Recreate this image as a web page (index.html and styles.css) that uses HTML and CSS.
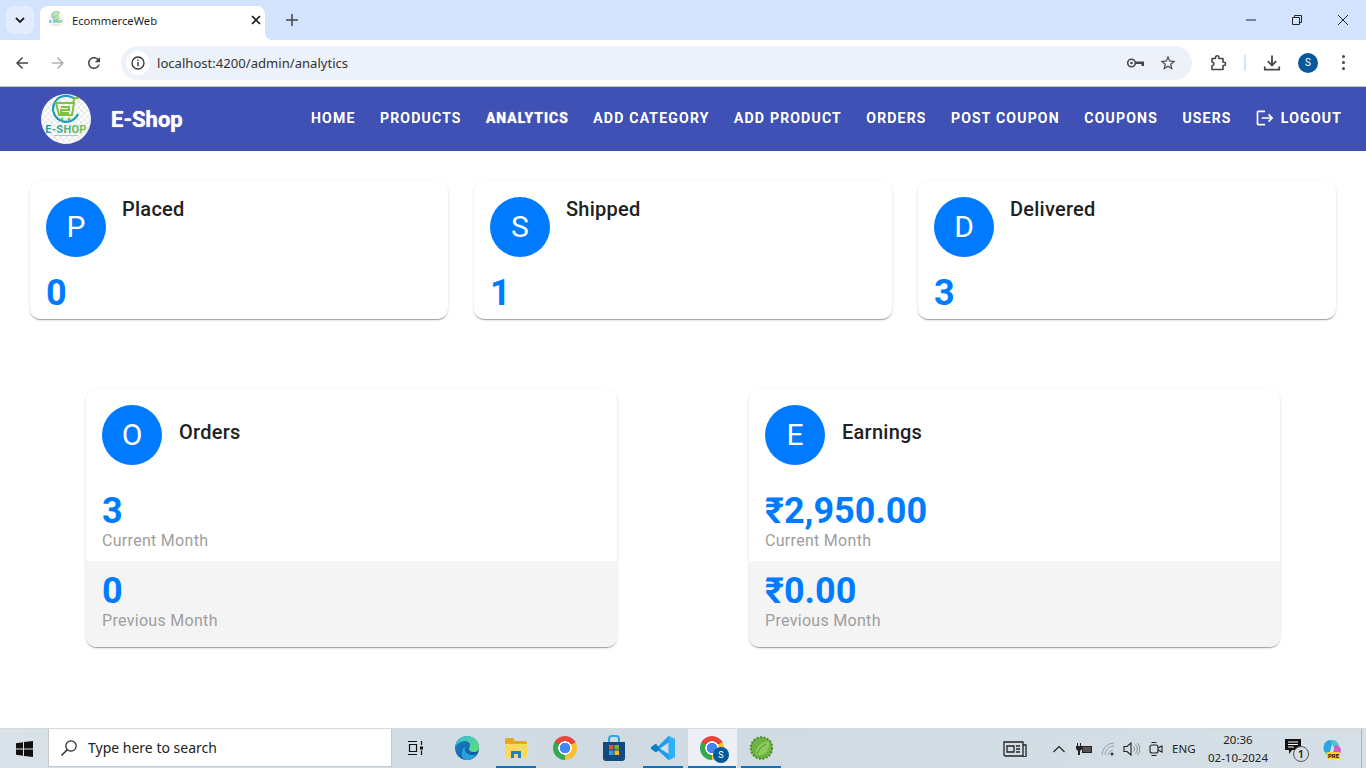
FILE: index.html
```html
<!DOCTYPE html>
<html lang="en">
<head>
    <meta charset="UTF-8">
    <meta name="viewport" content="width=device-width, initial-scale=1.0">
    <title>EcommerceWeb</title>
    <link rel="stylesheet" href="styles.css">
</head>
<body>
    <svg class="defs" width="0" height="0">
        <defs>
            <pattern id="checker" width="6" height="6" patternUnits="userSpaceOnUse">
                <rect width="6" height="6" fill="#fff"/>
                <rect width="3" height="3" fill="#ececec"/>
                <rect x="3" y="3" width="3" height="3" fill="#ececec"/>
            </pattern>
            <linearGradient id="word-fill" x1="0" y1="0" x2="1" y2="0">
                <stop offset="0" stop-color="#1c9cb8"/>
                <stop offset="1" stop-color="#7fc241"/>
            </linearGradient>
            <symbol id="shop-logo" viewBox="0 0 50 50">
                <circle cx="25" cy="25" r="25" fill="url(#checker)"/>
                <path d="M33 4.500A13 13 0 1 0 37 20" fill="none" stroke="#1c9cb8" stroke-width="2.2"/>
                <path d="M15 9H33L31 21H18ZM20 13H28V16H20V19H28" fill="none" stroke="#7fc241" stroke-width="2"/>
                <path d="M32 9L34 4H38" fill="none" stroke="#7fc241" stroke-width="2"/>
                <circle cx="21" cy="25" r="1.5" fill="#7fc241"/>
                <circle cx="28" cy="25" r="1.5" fill="#7fc241"/>
                <text x="25" y="39" text-anchor="middle" class="logo-word">E-SHOP</text>
                <rect x="13" y="41" width="24" height="1" fill="#b5c4c4"/>
            </symbol>
        </defs>
    </svg>

    <!-- navegador -->
    <div class="tabstrip">
        <div class="tab-search">
            <svg width="12" height="12" viewBox="0 0 12 12"><path d="M2 4l4 4 4-4" fill="none" stroke="#1f1f1f" stroke-width="1.8"/></svg>
        </div>
        <div class="tab">
            <svg class="favicon" width="16" height="16"><use href="#shop-logo"/></svg>
            <span class="tab-title">EcommerceWeb</span>
            <svg class="tab-close" width="10" height="10" viewBox="0 0 10 10"><path d="M1 1l8 8M9 1l-8 8" stroke="#1f1f1f" stroke-width="1.7"/></svg>
        </div>
        <svg class="new-tab" width="12" height="12" viewBox="0 0 12 12"><path d="M6 0v12M0 6h12" stroke="#444" stroke-width="1.5"/></svg>
        <div class="window-btns">
            <svg width="12" height="12" viewBox="0 0 12 12"><path d="M1 6h10" stroke="#222" stroke-width="1"/></svg>
            <svg width="12" height="12" viewBox="0 0 12 12"><path d="M1.500 3.500h7v7h-7zM3.500 3.500v-2h7v7h-2" fill="none" stroke="#222" stroke-width="1"/></svg>
            <svg width="12" height="12" viewBox="0 0 12 12"><path d="M1 1l10 10M11 1L1 11" stroke="#222" stroke-width="1"/></svg>
        </div>
    </div>
    <div class="toolbar">
        <svg class="tool-icon" width="18" height="18" viewBox="0 0 24 24"><path fill="#474747" d="M20 11H7.830l5.590-5.590L12 4l-8 8 8 8 1.410-1.410L7.830 13H20v-2z"/></svg>
        <svg class="tool-icon" width="18" height="18" viewBox="0 0 24 24"><path fill="#b0b0b0" d="M12 4l-1.410 1.410L16.170 11H4v2h12.170l-5.580 5.590L12 20l8-8z"/></svg>
        <svg class="tool-icon" width="18" height="18" viewBox="0 0 24 24"><path fill="#474747" d="M17.650 6.350C16.200 4.900 14.210 4 12 4c-4.420 0-7.990 3.580-7.990 8s3.570 8 7.990 8c3.730 0 6.840-2.550 7.730-6h-2.080c-.820 2.330-3.040 4-5.650 4-3.310 0-6-2.690-6-6s2.690-6 6-6c1.660 0 3.140.690 4.220 1.780L13 11h7V4l-2.350 2.350z"/></svg>
        <div class="omnibox">
            <span class="site-info">
                <svg width="14" height="14" viewBox="0 0 14 14"><circle cx="7" cy="7" r="6" fill="none" stroke="#333" stroke-width="1.3"/><path d="M7 6v4.200M7 3.600v1.300" stroke="#333" stroke-width="1.4"/></svg>
            </span>
            <span class="url">localhost:4200/admin/analytics</span>
            <svg class="omni-key" width="20" height="12" viewBox="0 0 20 12"><circle cx="5.500" cy="6" r="3.800" fill="none" stroke="#474747" stroke-width="1.6"/><circle cx="5.500" cy="6" r="1.300" fill="#474747"/><path d="M9.500 4.500h8.500v4.500h-2.500v-2h-6z" fill="#474747"/></svg>
            <svg class="omni-star" width="18" height="18" viewBox="0 0 24 24"><path fill="#474747" d="M22 9.240l-7.190-.620L12 2 9.190 8.630 2 9.240l5.460 4.730L5.820 21 12 17.270 18.180 21l-1.630-7.030L22 9.240zM12 15.400l-3.760 2.270 1-4.280-3.320-2.880 4.380-.380L12 6.100l1.710 4.040 4.380.380-3.320 2.880 1 4.280L12 15.400z"/></svg>
        </div>
        <div class="toolbar-right">
            <svg width="18" height="18" viewBox="0 0 18 18"><path d="M3 4.500h3.500V3.500a1.700 1.700 0 0 1 3.400 0v1h4.100v3.800h1a1.600 1.600 0 0 1 0 3.200h-1v4H3v-3.600a2 2 0 0 0 1.200-3.500A2 2 0 0 0 3 8z" fill="none" stroke="#474747" stroke-width="1.6" stroke-linejoin="round"/></svg>
            <span class="tool-sep"></span>
            <svg width="18" height="18" viewBox="0 0 18 18"><path d="M9 1.500v9.500M4.800 7.200L9 11.400l4.200-4.200M1.800 12.500v3.200h14.400v-3.200" fill="none" stroke="#474747" stroke-width="1.8"/></svg>
            <span class="profile">S</span>
            <span class="kebab"><i></i><i></i><i></i></span>
        </div>
    </div>

    <!-- pagina -->
    <nav class="navbar">
        <svg class="brand-logo" width="50" height="50"><use href="#shop-logo"/></svg>
        <span class="brand-name">E-Shop</span>
        <div class="nav-links">
            <a>Home</a>
            <a>Products</a>
            <a class="active">Analytics</a>
            <a>Add Category</a>
            <a>Add Product</a>
            <a>Orders</a>
            <a>Post Coupon</a>
            <a>Coupons</a>
            <a>Users</a>
            <a class="logout">
                <svg width="20" height="20" viewBox="0 0 24 24"><path fill="#fff" d="M17 7l-1.410 1.410L18.170 11H8v2h10.170l-2.580 2.580L17 17l5-5zM4 5h8V3H4c-1.100 0-2 .900-2 2v14c0 1.100.900 2 2 2h8v-2H4V5z"/></svg>
                Logout
            </a>
        </div>
    </nav>

    <main class="content">
        <section class="row-status">
            <div class="card">
                <div class="card-head">
                    <span class="avatar">P</span>
                    <span class="card-title">Placed</span>
                </div>
                <div class="status-value">0</div>
            </div>
            <div class="card">
                <div class="card-head">
                    <span class="avatar">S</span>
                    <span class="card-title">Shipped</span>
                </div>
                <div class="status-value">1</div>
            </div>
            <div class="card">
                <div class="card-head">
                    <span class="avatar">D</span>
                    <span class="card-title">Delivered</span>
                </div>
                <div class="status-value">3</div>
            </div>
        </section>

        <section class="row-totals">
            <div class="card total-card">
                <div class="total-top">
                    <div class="card-head centered">
                        <span class="avatar">O</span>
                        <span class="card-title">Orders</span>
                    </div>
                    <div class="total-value first">3</div>
                    <div class="total-label">Current Month</div>
                </div>
                <div class="total-bottom">
                    <div class="total-value">0</div>
                    <div class="total-label">Previous Month</div>
                </div>
            </div>
            <div class="card total-card">
                <div class="total-top">
                    <div class="card-head centered">
                        <span class="avatar">E</span>
                        <span class="card-title">Earnings</span>
                    </div>
                    <div class="total-value first">₹2,950.00</div>
                    <div class="total-label">Current Month</div>
                </div>
                <div class="total-bottom">
                    <div class="total-value">₹0.00</div>
                    <div class="total-label">Previous Month</div>
                </div>
            </div>
        </section>
    </main>

    <!-- barra de tarefas -->
    <footer class="taskbar">
        <div class="start">
            <svg width="17" height="16" viewBox="0 0 17 16"><path fill="#111" d="M0 2.300l7-1v6.200H0zM8 1.100L17 0v7.500H8zM0 8.500h7v6.200l-7-1zM8 8.500h9V16l-9-1.100z"/></svg>
        </div>
        <div class="search-box">
            <svg width="18" height="18" viewBox="0 0 18 18"><circle cx="11" cy="7" r="5.200" fill="none" stroke="#222" stroke-width="1.2"/><path d="M7.200 10.800L1.500 16.500" stroke="#222" stroke-width="1.4"/></svg>
            <span>Type here to search</span>
        </div>
        <div class="task-slot task-view">
            <svg width="18" height="16" viewBox="0 0 18 16"><path d="M1 1.500h9M1 14.500h9M2.500 4.500h7v7h-7zM14.500 1v4M14.500 10.500V15" fill="none" stroke="#111" stroke-width="1.2"/><rect x="13" y="6.500" width="3" height="3" fill="#111"/></svg>
        </div>
        <div class="task-slot">
            <svg width="26" height="26" viewBox="0 0 26 26">
                <defs>
                    <linearGradient id="edge-a" x1="0" y1="0" x2="1" y2="1"><stop offset="0" stop-color="#2fc5d8"/><stop offset="1" stop-color="#66dc73"/></linearGradient>
                    <linearGradient id="edge-b" x1="0" y1="0" x2="1" y2="1"><stop offset="0" stop-color="#1a88cf"/><stop offset="1" stop-color="#0f4f94"/></linearGradient>
                </defs>
                <circle cx="13" cy="13" r="12" fill="url(#edge-b)"/>
                <path d="M1 13C2 5 8 1 13 1c7 0 12 5 12 11 0 3-2 5-5 5-3 0-5-1-5-3 0-2 1-2 1-4 0-2-2-4-5-4-5 0-9 3-10 7z" fill="url(#edge-a)"/>
                <path d="M11 12c-1 4 2 8 7 8 2 0 4-.5 5-1.500-2 4-6 6.500-10 6.500-2 0-4-1-5-3-1-4 0-9 3-10z" fill="#2a9fdc"/>
            </svg>
        </div>
        <div class="task-slot running">
            <svg width="24" height="22" viewBox="0 0 24 22">
                <path d="M1 3a2 2 0 0 1 2-2h6l2 3h10a2 2 0 0 1 2 2v2H1z" fill="#e5a823"/>
                <path d="M1 7h22v12a2 2 0 0 1-2 2H3a2 2 0 0 1-2-2z" fill="#fbd860"/>
                <path d="M7 21v-7h10v7h-3v-4h-4v4z" fill="#1d7fc4"/>
            </svg>
        </div>
        <div class="task-slot"><span class="chrome-logo"></span></div>
        <div class="task-slot">
            <svg width="24" height="26" viewBox="0 0 24 26">
                <path d="M7 8V4a3 3 0 0 1 3-3h4a3 3 0 0 1 3 3v4" fill="none" stroke="#2ba7e0" stroke-width="2"/>
                <path d="M1 7h22v16a3 3 0 0 1-3 3H4a3 3 0 0 1-3-3z" fill="#114a7c"/>
                <rect x="7" y="10" width="4.500" height="4.500" fill="#e8512e"/>
                <rect x="12.500" y="10" width="4.500" height="4.500" fill="#6fb52c"/>
                <rect x="7" y="15.500" width="4.500" height="4.500" fill="#2aa5e3"/>
                <rect x="12.500" y="15.500" width="4.500" height="4.500" fill="#fbb912"/>
            </svg>
        </div>
        <div class="task-slot running">
            <svg width="26" height="26" viewBox="0 0 26 26">
                <path d="M18.500 1L25 4v18l-6.500 3L6 13.500z" fill="#1f9cf0"/>
                <path d="M18.500 1v24L25 22V4z" fill="#2bb1f5"/>
                <path d="M6 8.500L1 12l0 2 5 3.500 4-3.500z" fill="#0f7fc9"/>
                <path d="M18.500 7.500L10 13.500l8.500 5.500z" fill="#d3dee6"/>
            </svg>
        </div>
        <div class="task-slot running current">
            <span class="chrome-logo"></span>
            <span class="chrome-badge">S</span>
        </div>
        <div class="task-slot running">
            <svg width="24" height="24" viewBox="0 0 24 24">
                <circle cx="12.500" cy="12" r="10.800" fill="#6cb33f" stroke="#4f8c2c" stroke-width="2" stroke-dasharray="2 1.5"/>
                <path d="M7 19C6 12 11 6 20 5c1 7-2 14-9 14-1 0-3 0-4 0z" fill="#8ccb5e"/>
                <path d="M8 18c2-5 5-8 9-10" fill="none" stroke="#4f8c2c" stroke-width="1"/>
            </svg>
        </div>
        <div class="tray">
            <svg class="tray-news" width="24" height="16" viewBox="0 0 24 16"><path d="M1 1h19v14H2.500A1.500 1.500 0 0 1 1 13.500zM20 4h3v9.500a1.500 1.500 0 0 1-3 1.500M4 5h7v6H4zM13 5h4M13 8h4M13 11h4" fill="none" stroke="#222" stroke-width="1.3"/></svg>
            <svg class="tray-chevron" width="12" height="8" viewBox="0 0 12 8"><path d="M.5 7L6 1.500 11.500 7" fill="none" stroke="#222" stroke-width="1.2"/></svg>
            <svg class="tray-battery" width="16" height="12" viewBox="0 0 16 12"><path d="M1.500 0v3M4.500 0v3" stroke="#222" stroke-width="1"/><path d="M0 3h6v3L4 8v4H2V8L0 6z" fill="#222"/><rect x="6.500" y="3.500" width="9" height="6" fill="#555" stroke="#222"/></svg>
            <svg class="tray-wifi" width="14" height="14" viewBox="0 0 14 14"><path d="M1 13A12 12 0 0 1 13 1M4 13a9 9 0 0 1 9-9M7 13a6 6 0 0 1 5-5" fill="none" stroke="#9aa0a6" stroke-width="1"/><circle cx="11" cy="12" r="1.500" fill="#333"/></svg>
            <svg class="tray-volume" width="17" height="14" viewBox="0 0 17 14"><path d="M1 4.500h3L8 1v12L4 9.500H1z" fill="none" stroke="#222" stroke-width="1.1"/><path d="M10.500 4.500a3.500 3.500 0 0 1 0 5M12.500 2.500a6.500 6.500 0 0 1 0 9M14.500 1a9 9 0 0 1 0 12" fill="none" stroke="#8a8f94" stroke-width="1"/></svg>
            <svg class="tray-meet" width="14" height="16" viewBox="0 0 14 16"><rect x="1" y="4" width="8" height="8" rx="2" fill="none" stroke="#222" stroke-width="1.1"/><path d="M9 7l4-2v6l-4-2M2.500 1.500h5M2.500 14.500h5" fill="none" stroke="#222" stroke-width="1.1"/></svg>
            <span class="tray-lang">ENG</span>
            <div class="tray-clock">
                <span>20:36</span>
                <span>02-10-2024</span>
            </div>
            <div class="tray-notify">
                <svg width="16" height="15" viewBox="0 0 16 15"><path d="M0 0h16v11H7l-3 4v-4H0z" fill="#111"/><path d="M3 3h10M3 5.500h10M3 8h6" stroke="#fff" stroke-width="1"/></svg>
                <span class="notify-count">1</span>
            </div>
            <div class="tray-copilot">
                <svg width="20" height="20" viewBox="0 0 20 20">
                    <path d="M2 12C0 6 4 1 8 1h3L8 13c-.5 2-4 2-6-1z" fill="#2ca5e0"/>
                    <path d="M8 1h3c3 0 5 2 6 6l2 5-6-1z" fill="#4bc3d8"/>
                    <path d="M13 6c4 0 6 3 6 6 0 3-3 5-6 5H7c3 0 4-3 4.500-5z" fill="#d35bc5"/>
                    <path d="M3 13h8l-2 4c-2 1-5 0-6-4z" fill="#6fd36a"/>
                </svg>
                <span class="pre-tag">PRE</span>
            </div>
            <span class="show-desktop"></span>
        </div>
    </footer>
</body>
</html>
```

FILE: styles.css
```css
* {
    box-sizing: border-box;
}

body {
    font-family: 'Roboto', sans-serif;
    background: #fff;
    color: #212121;
    margin: 0;
    padding: 0;
    display: flex;
    flex-direction: column;
    height: 100vh;
    overflow: hidden;
}

.defs {
    display: block;
    height: 0;
}

.logo-word {
    font-family: 'Roboto', sans-serif;
    font-size: 11px;
    font-weight: 700;
    letter-spacing: .3px;
    fill: url(#word-fill);
}

/* navegador */
.tabstrip {
    height: 40px;
    flex: none;
    background: #d3e3fd;
    display: flex;
    align-items: flex-start;
}

.tab-search {
    width: 28px;
    height: 28px;
    margin: 6px 0 0 6px;
    border-radius: 8px;
    background: #e3ecfb;
    display: flex;
    align-items: center;
    justify-content: center;
}

.tab {
    position: relative;
    width: 225px;
    height: 34px;
    margin: 6px 0 0 6px;
    padding: 0 4px 6px 8px;
    background: #fff;
    border-radius: 8px 8px 0 0;
    display: flex;
    align-items: center;
}

.tab::after {
    content: "";
    position: absolute;
    right: -8px;
    bottom: 0;
    width: 8px;
    height: 8px;
    background: radial-gradient(circle at 100% 0, transparent 8px, #fff 8px);
}

.favicon {
    flex: none;
    margin-top: -3px;
}

.tab-title {
    margin-left: 8px;
    flex: 1;
    font-family: 'Noto Sans', sans-serif;
    font-size: 11.2px;
    color: #1f1f1f;
}

.tab-close {
    flex: none;
}

.new-tab {
    margin: 14px 0 0 21px;
}

.window-btns {
    margin-left: auto;
    display: flex;
    gap: 34px;
    padding: 14px 17px 0 0;
}

.toolbar {
    height: 47px;
    flex: none;
    background: #fff;
    border-radius: 8px 8px 0 0;
    border-bottom: 1px solid #c7c7c7;
    display: flex;
    align-items: center;
    padding: 0 13px 1px 13px;
}

.tool-icon {
    flex: none;
    margin-right: 18px;
}

.omnibox {
    flex: none;
    width: 1071px;
    height: 34px;
    background: #ecf1fa;
    border-radius: 17px;
    display: flex;
    align-items: center;
    padding: 0 15px 0 5px;
}

.site-info {
    width: 24px;
    height: 24px;
    border-radius: 50%;
    background: #fff;
    display: flex;
    align-items: center;
    justify-content: center;
}

.url {
    margin-left: 7px;
    padding-top: 1px;
    flex: 1;
    font-family: 'Noto Sans', sans-serif;
    font-size: 13.1px;
    color: #333;
}

.omni-star {
    margin-left: 13px;
}

.toolbar-right {
    display: flex;
    align-items: center;
    margin-left: 17px;
}

.tool-sep {
    width: 2px;
    height: 16px;
    margin: 0 17px;
    background: #d3e3fd;
}

.profile {
    width: 20px;
    height: 20px;
    margin-left: 17px;
    border-radius: 50%;
    background: #035a9b;
    color: #fff;
    font-size: 10px;
    display: flex;
    align-items: center;
    justify-content: center;
}

.kebab {
    margin-left: 24px;
    display: flex;
    flex-direction: column;
    gap: 3px;
}

.kebab i {
    width: 3px;
    height: 3px;
    border-radius: 50%;
    background: #474747;
}

/* navbar */
.navbar {
    height: 64px;
    flex: none;
    background: #3f51b5;
    color: #fff;
    display: flex;
    align-items: center;
    padding: 0 24px 0 41px;
}

.brand-logo {
    flex: none;
}

.brand-name {
    margin-left: 20px;
    font-size: 22px;
    font-weight: 700;
    text-shadow: 0 0 1px #fff;
}

.nav-links {
    margin-left: auto;
    display: flex;
    align-items: center;
    gap: 24.4px;
    padding-bottom: 2px;
}

.nav-links a {
    font-size: 14px;
    font-weight: 500;
    letter-spacing: 1.25px;
    text-transform: uppercase;
    color: #fff;
    display: flex;
    align-items: center;
    cursor: pointer;
    text-shadow: 0 0 .5px #fff;
}

.nav-links a.active {
    font-weight: 700;
    letter-spacing: 1px;
    text-shadow: 0 0 1px #fff;
}

.logout svg {
    margin: 0 6px 0 -1px;
}

/* cards */
.content {
    flex: 1;
    padding-top: 30px;
}

.row-status {
    display: flex;
    gap: 26px;
    padding: 0 30px;
}

.card {
    background: #fff;
    border-radius: 10px;
    box-shadow: 0 2px 1px -1px rgba(0, 0, 0, .2), 0 1px 1px 0 rgba(0, 0, 0, .14), 0 1px 3px 0 rgba(0, 0, 0, .12);
}

.row-status .card {
    flex: 1;
    height: 138px;
    padding: 16px;
}

.card-head {
    display: flex;
    gap: 16px;
}

.card-head.centered {
    align-items: center;
    gap: 17px;
}

.card-head.centered .card-title {
    padding-bottom: 6px;
}

.avatar {
    width: 60px;
    height: 60px;
    flex: none;
    padding-bottom: 2px;
    border-radius: 50%;
    background: #007bff;
    color: #fff;
    font-size: 30px;
    display: flex;
    align-items: center;
    justify-content: center;
}

.card-title {
    font-size: 20px;
    font-weight: 500;
    letter-spacing: .25px;
    line-height: 24px;
    color: #212121;
}

.status-value,
.total-value {
    font-size: 36px;
    font-weight: 700;
    line-height: 30px;
    color: #007bff;
}

.status-value {
    margin-top: 21px;
}

.row-totals {
    display: flex;
    justify-content: space-between;
    padding: 0 86px;
    margin-top: 70px;
}

.total-card {
    width: 531px;
    height: 258px;
    overflow: hidden;
}

.total-top {
    height: 172px;
    padding: 16px 16px 0;
}

.total-value.first {
    margin-top: 31px;
}

.total-label {
    margin-top: 5px;
    font-size: 16px;
    letter-spacing: .3px;
    line-height: 20px;
    color: #9e9e9e;
}

.total-bottom {
    height: 86px;
    padding: 15px 16px 0;
    background: #f4f4f4;
}

/* barra de tarefas */
.taskbar {
    height: 40px;
    flex: none;
    background: linear-gradient(90deg, #d9e2e9, #cfdae2 45%, #d6dfe6);
    display: flex;
    align-items: stretch;
    border-top: 1px solid #d2dae0;
}

.start {
    width: 48px;
    flex: none;
    display: flex;
    align-items: center;
    justify-content: center;
}

.search-box {
    width: 344px;
    flex: none;
    margin-bottom: 1px;
    padding-left: 11px;
    background: #fff;
    border: 1px solid #c3c9ce;
    border-top: none;
    display: flex;
    align-items: center;
    gap: 10px;
    font-family: 'Noto Sans', sans-serif;
    font-size: 14px;
    color: #222;
}

.task-slot {
    position: relative;
    width: 49px;
    flex: none;
    padding: 0 2px 1px 0;
    display: flex;
    align-items: center;
    justify-content: center;
}

.task-view {
    margin-right: 2px;
}

.task-slot.running::after {
    content: "";
    position: absolute;
    left: 4px;
    right: 5px;
    bottom: 0;
    height: 2px;
    background: #0a74c4;
}

.task-slot.current {
    background: #eceff4;
}

.task-slot.current::after {
    left: 0;
    right: 1px;
}

.chrome-logo {
    width: 24px;
    height: 24px;
    border-radius: 50%;
    background:
        radial-gradient(circle, #4285f4 0 5px, #fff 5.5px 6.5px, transparent 7px),
        conic-gradient(from -60deg, #e8453c 0 120deg, #fbc02d 120deg 240deg, #34a853 240deg 360deg);
}

.chrome-badge {
    position: absolute;
    left: 25px;
    top: 18px;
    width: 16px;
    height: 16px;
    border-radius: 50%;
    background: #035a9b;
    color: #fff;
    font-size: 9px;
    display: flex;
    align-items: center;
    justify-content: center;
}

.tray {
    margin-left: auto;
    display: flex;
    align-items: center;
    font-family: 'Noto Sans', sans-serif;
    color: #222;
    font-size: 11.5px;
}

.tray-news {
    margin-right: 26px;
}

.tray-chevron {
    margin-right: 11px;
}

.tray-battery {
    margin-right: 9px;
}

.tray-wifi {
    margin-right: 8px;
}

.tray-volume {
    margin-right: 9px;
}

.tray-meet {
    margin-right: 9px;
}

.tray-lang {
    width: 26px;
    margin-right: 8px;
}

.tray-clock {
    width: 64px;
    display: flex;
    flex-direction: column;
    align-items: center;
    line-height: 18px;
    margin-right: 15px;
}

.tray-notify {
    position: relative;
    width: 24px;
    height: 26px;
    margin-right: 13px;
    padding-top: 3px;
}

.notify-count {
    position: absolute;
    left: 8px;
    top: 10px;
    width: 16px;
    height: 16px;
    border: 1px solid #555;
    border-radius: 50%;
    background: #d6dfe6;
    font-size: 11px;
    font-weight: 600;
    line-height: 14px;
    text-align: center;
}

.tray-copilot {
    position: relative;
    width: 20px;
    height: 20px;
    margin-right: 19px;
}

.pre-tag {
    position: absolute;
    left: 5px;
    top: 13px;
    padding: 0 1px;
    background: #fbd12c;
    border-radius: 1px;
    font-family: 'Roboto', sans-serif;
    font-size: 6px;
    font-weight: 700;
    line-height: 7px;
    color: #111;
}

.show-desktop {
    width: 1px;
    height: 100%;
    margin-right: 4px;
    background: #aab2b8;
}
```
